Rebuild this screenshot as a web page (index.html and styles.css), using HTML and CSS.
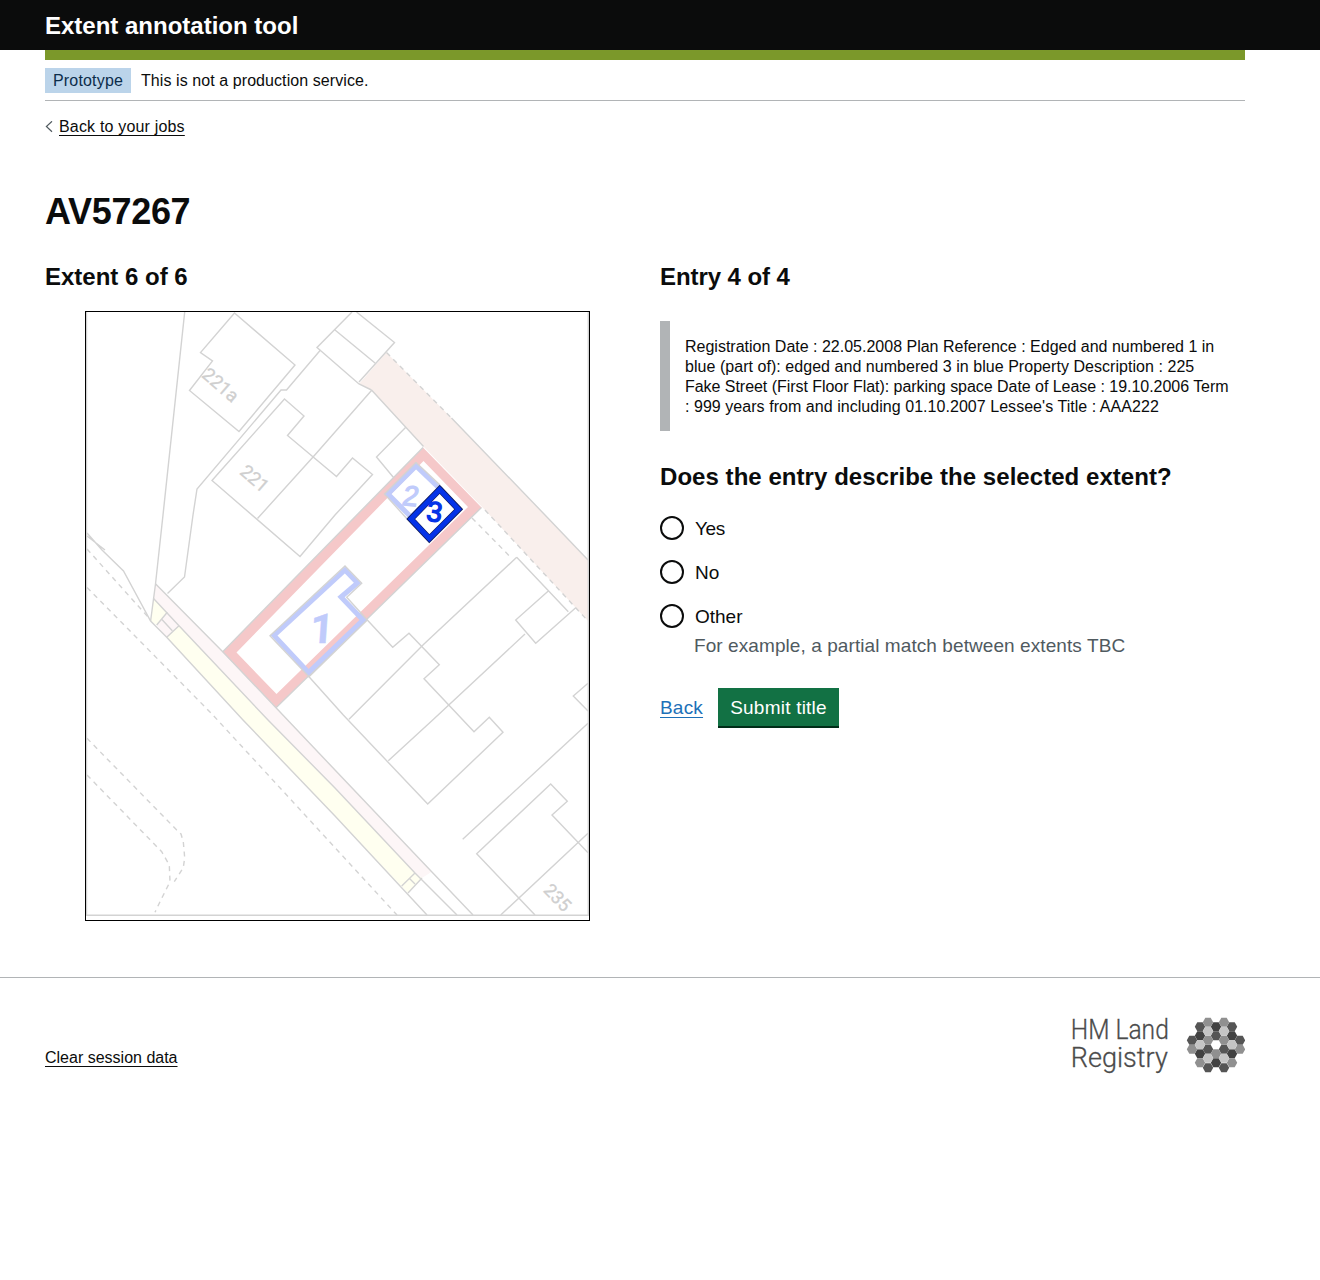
FILE: index.html
```html
<!DOCTYPE html>
<html lang="en">
<head>
<meta charset="utf-8">
<title>Extent annotation tool</title>
<link rel="stylesheet" href="styles.css">
</head>
<body>
<header class="header"><div class="container"><a class="header-title">Extent annotation tool</a></div></header>
<div class="container">
  <div class="header-bar"></div>
  <div class="phase-banner"><strong class="tag">Prototype</strong><span class="phase-text">This is not a production service.</span></div>
  <a class="back-link"><svg class="chevron" width="8" height="12" viewBox="0 0 8 12"><path d="M7 0.3 1.4 5.5 7 10.7" fill="none" stroke="#505a5f" stroke-width="1.2"/></svg><span class="back-text">Back to your jobs</span></a>
  <main class="main">
    <h1 class="title">AV57267</h1>
    <div class="columns">
      <section class="column">
        <h2 class="heading">Extent 6 of 6</h2>
        <figure class="map">
          <svg width="503" height="608" viewBox="86 312 503 608">
            <g class="fills">
              <path fill="#f9efec" d="M386.5 352.5 359 384 371.5 390 423.5 446.5 485 510 588 621V560L545 515 451.5 418Z"/>
              <path fill="#fdf6f7" d="M155.7 584 223 652 276 707.7 335 770 431.7 871.7 422 878 415 873 335 788 268 720 179 625.7 166.7 637.3 156.7 625 167.3 612.3 153.3 598.3Z"/>
              <path fill="#fffff0" d="M153.3 598.3 167.3 612.3 156.7 625 150.7 621ZM179 625.7 268 720 335 788 415 873 422 878 408 893 335 816 243 720 166.7 637.3Z"/>
              <path fill="#f5c8c9" fill-rule="evenodd" d="M423 447.5 481.5 507.5 276 707.7 222.5 652ZM423.5 461 468 507 276.5 694 236.5 652.5Z"/>
            </g>
            <path class="line" d="M86.5 312V915.3H588.3V312"/>
            <g class="line">
              <path d="M184.7 312 163 515 155.5 584 150.6 621"/>
              <path d="M234.5 313 295 365 239 431.5 189.5 390.5 212.5 361 200.5 352.5Z"/>
              <path d="M352 312 317 347.5 359 384 371.5 390M335 330 375 363M356.5 312 394.5 342.5 359 382"/>
              <path d="M320.5 350 286.5 390H281L197 489 193 515 184.5 577 167.5 593.5"/>
              <path d="M284.5 399 304 416 287.5 435.5 336.5 476.5 352.5 458 372.5 474.5 335 515 300 556.5 212 480.5Z"/>
              <path d="M371.5 390.5 313.5 456.5 257.5 518.5M371.5 390 423.5 446.5M451.5 418 545 515 588 560"/>
              <path d="M406 427 376.5 457 393.5 477.5M423 447.5 222.5 652M481.5 507.5 276 707.7"/>
              <path d="M87 533 102 550 123.5 571 150.6 621 166.7 637.3 243 720 335 816 427 915M87 536 105 550"/>
              <path d="M155.7 584 223 652 276 707.7 335 770 431.7 871.7 473 915"/>
              <path d="M153.3 598.3 179 625.7 268 720 335 788 415 873 457 915"/>
              <path d="M167.3 612.3 156.7 625M179 625.7 166.7 637.3M161.7 619.3 172.3 630.7M415 873 401.7 886M422 878 408 893M409 878 415 884"/>
              <path d="M548.3 591 515.7 620 535.7 643.3 575.7 607.7M516.7 557.3 568.3 611.7M525 634 432.7 720 388.3 760.7M516.7 557.3 424 644 349 719.3"/>
              <path d="M367.3 620 392.7 647.3 409 633.3 439.3 664.7 424 678.7 474 731.7 489.3 717.3 503 732.3 427.7 804 343.3 715 309 676.7"/>
              <path d="M588 683.3 573.3 696 588 711M588 723.3 462.7 839.3"/>
              <path d="M588 852.7 552 815 567.3 801.3 550.7 784 476.7 853.7 535 915M588 833.3 500.7 915"/>
            </g>
            <g class="line dashed">
              <path d="M386.5 352.5 451.5 418M485 510 588 621M472 518 511.7 558.3"/>
              <path d="M87 549 148 617M87 587.5 212 714 397 915"/>
              <path d="M87 738.3 176.7 830 181 834 183.3 841.7 184.7 857.7 183.3 867.7 174.3 881.7"/>
              <path d="M87 775 161.7 851.7 169.3 865 170 881.7 160 901.7 155 912.3"/>
            </g>
            <path class="plot" d="M416 466 440 489 411 517 388 494ZM274 635.5 345 570 357.5 583 341 597 363 620 308.5 672.5Z"/>
            <path class="line" d="M416 462.5 384.5 494 406.7 518.5M416 462.5 440 485M270 635.7 345 566 361.7 583.3 346.7 597.3 367.3 620 309 676.7Z"/>
            <text class="plot-faint" text-anchor="middle" font-size="28" transform="translate(411 495.5) skewX(-6) rotate(6)" y="10">2</text>
            <path fill="#fff" d="M439.7 489 459 509.3 429.3 539 411 519Z"/>
            <path fill="none" stroke="#101c60" stroke-width="6.4" d="M439.7 489.3 458.7 509.3 429.3 538.7 410.7 519Z"/>
            <path fill="none" stroke="#0433e8" stroke-width="4.8" d="M439.7 489.5 458.5 509.3 429.3 538.5 410.9 519Z"/>
            <g text-anchor="middle">
              <text class="plot-faint plot-one" font-size="41" transform="translate(322 628) skewX(-4)" y="14.5">1</text>
              <text class="plot-active" font-size="28" transform="translate(434.5 511.5) rotate(8)" y="10">3</text>
              <text class="house" font-size="18.5" transform="translate(220.7 385) rotate(41)" y="6.5">221a</text>
              <text class="house" font-size="18.5" transform="translate(254.7 478.5) rotate(41)" y="6.5">221</text>
              <text class="house" font-size="18" transform="translate(557.7 897.3) rotate(46)" y="6.5">235</text>
            </g>
          </svg>
        </figure>
      </section>
      <section class="column">
        <h2 class="heading heading-entry">Entry 4 of 4</h2>
        <div class="inset">Registration Date : 22.05.2008 Plan Reference : Edged and numbered 1 in<br><span class="wide">blue (part of): edged and numbered 3 in blue Property Description : 225</span><br><span class="narrow">Fake Street (First Floor Flat): parking space Date of Lease : 19.10.2006 Term</span><br><span class="wide">: 999 years from and including 01.10.2007 Lessee's Title : AAA222</span></div>
        <h2 class="heading heading-question">Does the entry describe the selected extent?</h2>
        <div class="radios">
          <label class="radio"><span class="radio-dot"></span><span class="radio-label radio-yes">Yes</span></label>
          <label class="radio"><span class="radio-dot"></span><span class="radio-label">No</span></label>
          <label class="radio"><span class="radio-dot"></span><span class="radio-label">Other</span></label>
        </div>
        <div class="hint">For example, a partial match between extents TBC</div>
        <div class="actions"><a class="link">Back</a><button class="button">Submit title</button></div>
      </section>
    </div>
  </main>
</div>
<footer class="footer">
  <div class="container footer-row">
    <a class="footer-link">Clear session data</a>
    <svg class="logo" width="177" height="70" viewBox="1068 1008 177 70">
      <g class="logo-text"><text x="1070.8" y="1038.7" textLength="98" lengthAdjust="spacingAndGlyphs">HM Land</text><text x="1070.8" y="1067.2" textLength="97" lengthAdjust="spacingAndGlyphs">Registry</text></g>
      <defs><path id="hex" d="M-5.2 0-2.7-4.5H2.7L5.2 0 2.7 4.5H-2.7Z"/></defs>
      <g fill="#424242"><use href="#hex" x="1200" y="1035.8"/><use href="#hex" x="1200" y="1053.8"/><use href="#hex" x="1216" y="1026.8"/><use href="#hex" x="1216" y="1062.8"/><use href="#hex" x="1232" y="1035.8"/><use href="#hex" x="1232" y="1053.8"/></g>
      <g fill="#555"><use href="#hex" x="1192" y="1040.3"/><use href="#hex" x="1200" y="1026.8"/><use href="#hex" x="1208" y="1049.3"/><use href="#hex" x="1208" y="1067.8"/><use href="#hex" x="1216" y="1035.8"/><use href="#hex" x="1224" y="1049.3"/><use href="#hex" x="1224" y="1067.8"/><use href="#hex" x="1232" y="1026.8"/><use href="#hex" x="1240" y="1040.3"/></g>
      <g fill="#909090"><use href="#hex" x="1192" y="1049.3"/><use href="#hex" x="1200" y="1062.8"/><use href="#hex" x="1208" y="1022.3"/><use href="#hex" x="1208" y="1040.3"/><use href="#hex" x="1216" y="1053.8"/><use href="#hex" x="1224" y="1022.3"/><use href="#hex" x="1224" y="1040.3"/><use href="#hex" x="1232" y="1062.8"/><use href="#hex" x="1240" y="1049.3"/></g>
      <g fill="#c5c5c5"><use href="#hex" x="1200" y="1044.8"/><use href="#hex" x="1208" y="1031.3"/><use href="#hex" x="1208" y="1058.3"/><use href="#hex" x="1224" y="1031.3"/><use href="#hex" x="1224" y="1058.3"/><use href="#hex" x="1232" y="1044.8"/></g>
    </svg>
  </div>
</footer>
</body>
</html>
```
FILE: styles.css
```css
* { box-sizing: border-box; }
body { margin: 0; color: #0b0c0c; background: #fff; font-family: "Liberation Sans", Arial, sans-serif; font-size: 16px; line-height: 20px; }
.container { width: 1200px; margin-left: 45px; }
.header { height: 50px; background: #0b0c0c; color: #fff; }
.header-title { display: inline-block; padding-top: 11px; font-size: 24px; line-height: 30px; font-weight: 700; }
.header-bar { height: 10px; background: #7b982a; }
.phase-banner { display: flex; align-items: center; height: 41px; border-bottom: 1px solid #b1b4b6; }
.phase-text { padding-top: 2px; letter-spacing: 0.075px; }
.tag { height: 25px; width: 86px; margin-right: 10px; padding: 3px 8px 2px; background: #bbd4ea; color: #0c2d4a; font-weight: 400; letter-spacing: 0.17px; white-space: nowrap; }
.back-link { display: flex; align-items: center; gap: 6px; height: 20px; margin-top: 16px; }
.back-text { letter-spacing: 0.18px; text-decoration: underline; text-decoration-thickness: 1px; text-underline-offset: 3px; }
.main { padding-top: 55px; }
.title { margin: 0; font-size: 36px; line-height: 40px; font-weight: 700; letter-spacing: -0.3px; }
.columns { display: grid; grid-template-columns: 585px 585px; gap: 30px; margin-top: 30px; }
.heading { margin: 0; font-size: 24px; line-height: 30px; font-weight: 700; }
.heading-entry { letter-spacing: -0.08px; }
.map { width: 505px; height: 610px; margin: 19px 40px 0; border: 1px solid #000; }
.map svg { display: block; }
.line { fill: none; stroke: #d3d3d3; stroke-width: 1.4; }
.dashed { stroke-dasharray: 5 4.5; }
.plot { fill: none; stroke: #c0cbfb; stroke-width: 5; }
.plot-faint { fill: #c0cbfb; stroke: #c0cbfb; stroke-width: 1.3; }
.plot-one { font-family: Roboto, sans-serif; font-weight: 700; stroke-width: 0.4; }
.plot-active { fill: #0433e8; stroke: #0433e8; stroke-width: 1.3; }
.house { fill: #cfcfcf; stroke: #cfcfcf; stroke-width: 0.3; font-family: Roboto, sans-serif; }
.inset { height: 110px; margin-top: 29px; padding: 16px 0 14px 15px; border-left: 10px solid #b1b4b6; white-space: nowrap; }
.wide { letter-spacing: 0.045px; }
.narrow { letter-spacing: -0.04px; }
.heading-question { margin-top: 31px; letter-spacing: 0.05px; }
.radios { display: flex; flex-direction: column; gap: 20px; margin-top: 24px; font-size: 19px; }
.radio { display: flex; align-items: center; gap: 11px; height: 24px; }
.radio-dot { width: 24px; height: 24px; border: 2px solid #0b0c0c; border-radius: 50%; }
.radio-label { padding-top: 2px; }
.radio-yes { letter-spacing: -0.4px; }
.hint { margin: 5px 0 0 34px; color: #505a5f; font-size: 19px; line-height: 25px; letter-spacing: 0.08px; }
.actions { display: flex; align-items: center; height: 40px; margin-top: 30px; font-size: 19px; }
.link { width: 43px; margin-right: 15px; letter-spacing: 0.2px; color: #1d70b8; text-decoration: underline; text-decoration-thickness: 1px; text-underline-offset: 3px; }
.button { width: 121px; height: 40px; padding: 1px 0 0; border: 0; border-bottom: 2px solid #002d18; background: #127144; color: #fff; font: inherit; letter-spacing: 0.22px; white-space: nowrap; }
.footer { margin-top: 56px; border-top: 1px solid #b1b4b6; padding-top: 30px; }
.footer-row { display: flex; justify-content: space-between; }
.footer-link { margin-top: 40px; text-decoration: underline; text-decoration-thickness: 1px; text-underline-offset: 3px; }
.logo-text { fill: #4b4b4b; stroke: #4b4b4b; stroke-width: 0.3; font-family: Roboto, "Open Sans", sans-serif; font-weight: 300; font-size: 28px; }
```
